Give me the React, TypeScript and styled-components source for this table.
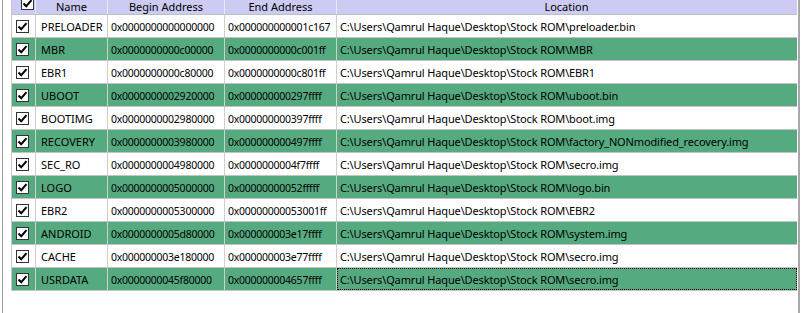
import React from 'react';
import styled, { createGlobalStyle } from 'styled-components';

const GlobalStyle = createGlobalStyle`
  html, body {
    margin: 0;
    padding: 0;
    background: #ffffff;
  }
  body {
    font-family: "Noto Sans", "Open Sans", sans-serif;
    font-size: 11px;
    color: #000;
  }
`;

const Frame = styled.div`
  box-sizing: border-box;
  width: 798px;
  height: 313px;
  margin-left: 2px;
  border-left: 1px solid #a0a0a0;
  border-right: 2px solid #a8a8a8;
  padding-left: 8px;
  overflow: hidden;
`;

const Grid = styled.div`
  display: flex;
  flex-direction: column;
  width: 785px;
  border-left: 1px solid #c8c8c8;
`;

const COLS = '24px 72px 117px 112px 460px';

const HeaderRow = styled.div`
  display: grid;
  grid-template-columns: ${COLS};
  height: 14px;
  background: #cbcbf3;
  border-bottom: 1px solid #c0c0c0;
  overflow: hidden;
`;

const HeaderCell = styled.div<{ $last?: boolean }>`
  box-sizing: border-box;
  height: 14px;
  border-right: 1px solid ${(p) => (p.$last ? 'transparent' : '#e8e8fb')};
  display: flex;
  justify-content: center;
  align-items: flex-end;
  line-height: 14px;
  white-space: nowrap;
  overflow: hidden;
`;

const HeaderCheck = styled.div`
  box-sizing: border-box;
  height: 14px;
  border-right: 1px solid #e8e8fb;
  position: relative;
  overflow: hidden;
`;

const Row = styled.div<{ $green: boolean }>`
  display: grid;
  grid-template-columns: ${COLS};
  height: 23px;
  box-sizing: border-box;
  background: ${(p) => (p.$green ? '#56aa80' : '#ffffff')};
  border-bottom: 1px solid #c4c4c4;
`;

const Cell = styled.div<{ $pad?: number; $focus?: boolean; $last?: boolean }>`
  box-sizing: border-box;
  height: 22px;
  display: flex;
  align-items: center;
  padding-left: ${(p) => p.$pad ?? 3}px;
  padding-top: 1px;
  border-right: 1px solid ${(p) => (p.$last ? 'transparent' : '#cfcfcf')};
  white-space: nowrap;
  overflow: hidden;
  outline: ${(p) => (p.$focus ? '1px dotted #000' : 'none')};
  outline-offset: -1px;
`;

const AddressCell = styled(Cell)`
  font-size: 10.5px;
  letter-spacing: -0.25px;
`;

const PathCell = styled(Cell)`
  letter-spacing: -0.14px;
`;

const CheckCell = styled.div`
  box-sizing: border-box;
  height: 22px;
  border-right: 1px solid #cfcfcf;
  display: flex;
  align-items: center;
  padding-left: 4px;
  padding-top: 1px;
`;

const Box = styled.span`
  box-sizing: border-box;
  width: 13px;
  height: 13px;
  border: 1px solid #333;
  background: #fff;
  display: inline-flex;
  align-items: center;
  justify-content: center;
`;

const HeaderBox = styled(Box)`
  position: absolute;
  left: 9px;
  top: -3px;
`;

const Tick = () => (
  <svg width="11" height="11" viewBox="0 0 11 11">
    <path d="M1.5 5.5 L4.2 8.2 L9.5 2.2" fill="none" stroke="#000" strokeWidth="2" />
  </svg>
);

const base = 'C:\\Users\\Qamrul Haque\\Desktop\\Stock ROM\\';

const rows: [string, string, string, string][] = [
  ['PRELOADER', '0x0000000000000000', '0x000000000001c167', 'preloader.bin'],
  ['MBR', '0x0000000000c00000', '0x0000000000c001ff', 'MBR'],
  ['EBR1', '0x0000000000c80000', '0x0000000000c801ff', 'EBR1'],
  ['UBOOT', '0x0000000002920000', '0x000000000297ffff', 'uboot.bin'],
  ['BOOTIMG', '0x0000000002980000', '0x000000000397ffff', 'boot.img'],
  ['RECOVERY', '0x0000000003980000', '0x000000000497ffff', 'factory_NONmodified_recovery.img'],
  ['SEC_RO', '0x0000000004980000', '0x0000000004f7ffff', 'secro.img'],
  ['LOGO', '0x0000000005000000', '0x00000000052fffff', 'logo.bin'],
  ['EBR2', '0x0000000005300000', '0x00000000053001ff', 'EBR2'],
  ['ANDROID', '0x0000000005d80000', '0x000000003e17ffff', 'system.img'],
  ['CACHE', '0x000000003e180000', '0x000000003e77ffff', 'secro.img'],
  ['USRDATA', '0x0000000045f80000', '0x000000004657ffff', 'secro.img'],
];

const App: React.FC = () => {
  return (
    <>
      <GlobalStyle />
      <Frame>
        <Grid>
          <HeaderRow>
            <HeaderCheck>
              <HeaderBox>
                <Tick />
              </HeaderBox>
            </HeaderCheck>
            <HeaderCell>Name</HeaderCell>
            <HeaderCell>Begin Address</HeaderCell>
            <HeaderCell>End Address</HeaderCell>
            <HeaderCell $last>Location</HeaderCell>
          </HeaderRow>
          {rows.map(([name, begin, end, file], i) => (
            <Row key={name} $green={i % 2 === 1}>
              <CheckCell>
                <Box>
                  <Tick />
                </Box>
              </CheckCell>
              <Cell $pad={5}>{name}</Cell>
              <AddressCell>{begin}</AddressCell>
              <AddressCell>{end}</AddressCell>
              <PathCell $last $focus={i === rows.length - 1}>
                {base + file}
              </PathCell>
            </Row>
          ))}
        </Grid>
      </Frame>
    </>
  );
};

export default App;
